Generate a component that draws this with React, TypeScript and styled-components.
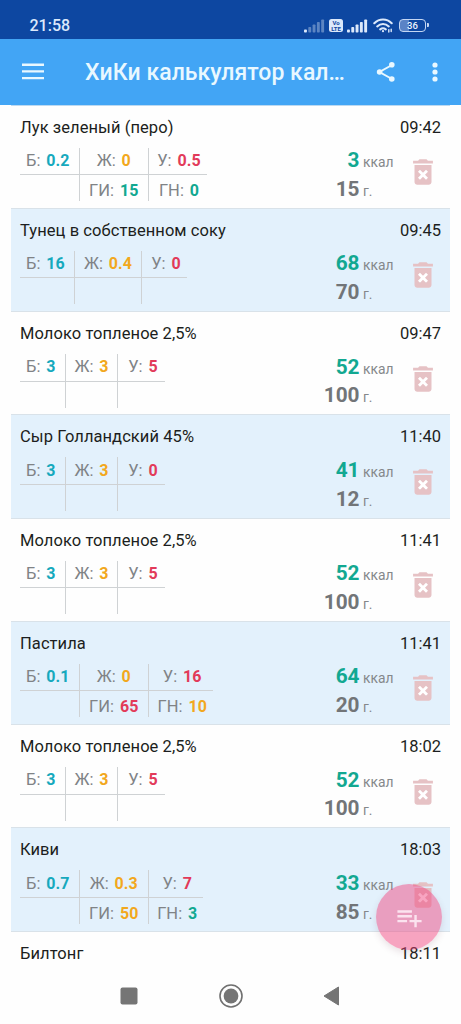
import React from 'react';
import styled, { createGlobalStyle } from 'styled-components';

const GlobalStyle = createGlobalStyle`
  * { box-sizing: border-box; }
  body { margin: 0; background: #fefefe; font-family: Roboto, "Liberation Sans", sans-serif; }
`;

const Screen = styled.div`
  position: relative;
  display: flex;
  flex-direction: column;
  width: 461px;
  height: 1024px;
  overflow: hidden;
  background: #fefefe;
`;

const StatusBar = styled.header`
  flex: none;
  display: flex;
  align-items: center;
  justify-content: space-between;
  height: 38.5px;
  padding: 13px 32px 0 29.5px;
  background: #0d47a1;
  color: #dce9fb;
`;

const Clock = styled.span`
  font-size: 16px;
  font-weight: 500;
  line-height: 20px;
`;

const StatusIcons = styled.div`
  display: flex;
  align-items: center;
  height: 16px;
`;

const Toolbar = styled.div`
  flex: none;
  display: flex;
  align-items: center;
  height: 66px;
  padding: 0 16px 0 22px;
  background: #42a5f5;
  color: #e9f8ff;
`;

const AppTitle = styled.h1`
  width: 266px;
  margin: 2px 0 0 41px;
  font-size: 23px;
  font-weight: 500;
  line-height: 30px;
  letter-spacing: 0.05px;
  white-space: nowrap;
`;

const IconButton = styled.button<{ $gap: number }>`
  display: flex;
  margin: 0 0 0 ${(p) => p.$gap}px;
  padding: 0;
  border: 0;
  background: none;
  color: inherit;
`;

const List = styled.main`
  flex: none;
  height: 860.5px;
  margin: 0 11px;
  overflow: hidden;
  border-top: 1px solid #bcd9f1;
`;

const Entry = styled.article<{ $tinted: boolean }>`
  display: flex;
  flex-direction: column;
  height: 103.25px;
  padding: 11px 9px 0 9px;
  background: ${(p) => (p.$tinted ? '#e3f1fc' : '#fefefe')};
  border-bottom: 1px solid #d9e2e9;
`;

const EntryHead = styled.div`
  display: flex;
  justify-content: space-between;
  height: 22px;
  color: #1c1e20;
  font-size: 16.5px;
  line-height: 22px;
  white-space: nowrap;
`;

const Name = styled.span`
  letter-spacing: 0.07px;
`;

const EntryBody = styled.div`
  display: flex;
  justify-content: space-between;
  margin-top: 9px;
`;

const Nutrients = styled.div<{ $cols: string }>`
  display: grid;
  grid-template-columns: ${(p) => p.$cols};
  grid-template-rows: 27.5px 26px;
`;

const Cell = styled.div<{ $first?: boolean; $last?: boolean; $top?: boolean }>`
  display: flex;
  align-items: center;
  justify-content: ${(p) => (p.$first ? 'flex-start' : 'center')};
  padding: ${(p) => (p.$top ? '0' : '6px')} 0 0 ${(p) => (p.$first ? '6px' : p.$last ? '3px' : '0')};
  border-right: ${(p) => (p.$last ? '0' : '1.5px solid #cfd2d4')};
  border-bottom: ${(p) => (p.$top ? '1.5px solid #cfd2d4' : '0')};
  color: #808386;
  font-size: 16.5px;
  line-height: 20px;
  white-space: pre;
`;

const Value = styled.b<{ $color: string }>`
  margin-left: 1.8px;
  color: ${(p) => p.$color};
  font-weight: 700;
  font-size: 16px;
  letter-spacing: 0.1px;
`;

const Side = styled.div`
  display: flex;
  align-items: flex-start;
`;

const Amounts = styled.div`
  display: grid;
  grid-template-columns: 60px 32px;
  grid-template-rows: 28.75px 28.75px;
  column-gap: 3.5px;
  align-items: baseline;
  line-height: 29px;
  margin: -1.5px 11px 0 0;
`;

const Amount = styled.b<{ $color: string }>`
  color: ${(p) => p.$color};
  font-size: 20.8px;
  font-weight: 700;
  text-align: right;
`;

const Unit = styled.span`
  color: #85888b;
  font-size: 13.8px;
`;

const DeleteButton = styled.button`
  display: flex;
  margin: 7.5px 1px 0 0;
  padding: 0;
  border: 0;
  background: none;
`;

const Fab = styled.button`
  position: absolute;
  left: 376px;
  top: 884px;
  display: flex;
  align-items: center;
  justify-content: center;
  width: 66px;
  height: 66px;
  padding: 0;
  border: 0;
  border-radius: 50%;
  background: rgba(240, 66, 126, 0.48);
  box-shadow: 0 3px 7px rgba(90, 40, 60, 0.13);
`;

const NavBar = styled.nav`
  flex: 1;
  display: flex;
  align-items: center;
  justify-content: space-between;
  padding: 3px 121px 0 120px;
`;

const TEAL = '#12a891';
const CYAN = '#16a9bd';
const AMBER = '#f2a81d';
const RED = '#e23a59';
const GREY = '#727578';

type Index = { value: string; color: string };
type Details = {
  macros: [string, string, string];
  gi?: Index;
  gn?: Index;
  kcal: string;
  grams: string;
  cols: string;
};
type Food = { name: string; time: string; details?: Details };

const NARROW = '46px 52px 47px';

const foods: Food[] = [
  { name: 'Лук зеленый (перо)', time: '09:42', details: { macros: ['0.2', '0', '0.5'], gi: { value: '15', color: TEAL }, gn: { value: '0', color: TEAL }, kcal: '3', grams: '15', cols: '60px 68.5px 58px' } },
  { name: 'Тунец в собственном соку', time: '09:45', details: { macros: ['16', '0.4', '0'], kcal: '68', grams: '70', cols: '55px 67px 45px' } },
  { name: 'Молоко топленое 2,5%', time: '09:47', details: { macros: ['3', '3', '5'], kcal: '52', grams: '100', cols: NARROW } },
  { name: 'Сыр Голландский 45%', time: '11:40', details: { macros: ['3', '3', '0'], kcal: '41', grams: '12', cols: NARROW } },
  { name: 'Молоко топленое 2,5%', time: '11:41', details: { macros: ['3', '3', '5'], kcal: '52', grams: '100', cols: NARROW } },
  { name: 'Пастила', time: '11:41', details: { macros: ['0.1', '0', '16'], gi: { value: '65', color: RED }, gn: { value: '10', color: AMBER }, kcal: '64', grams: '20', cols: '60px 68.5px 64.5px' } },
  { name: 'Молоко топленое 2,5%', time: '18:02', details: { macros: ['3', '3', '5'], kcal: '52', grams: '100', cols: NARROW } },
  { name: 'Киви', time: '18:03', details: { macros: ['0.7', '0.3', '7'], gi: { value: '50', color: AMBER }, gn: { value: '3', color: TEAL }, kcal: '33', grams: '85', cols: '60px 68.5px 54.5px' } },
  { name: 'Билтонг', time: '18:11' },
];

const Signal = ({ dim }: { dim?: boolean }) => (
  <svg width="21" height="14" viewBox="0 0 21 14" fill="#dce9fb">
    {[0, 1, 2, 3, 4].map((i) => (
      <rect key={i} x={i * 4.3} y={10.5 - i * 2.5} width="2.9" height={3 + i * 2.5} rx="0.8" opacity={dim && i > 0 ? 0.38 : 1} />
    ))}
  </svg>
);

const VolteBadge = styled.span`
  display: flex;
  flex-direction: column;
  align-items: center;
  justify-content: center;
  width: 14px;
  height: 13px;
  margin: 0 4px 0 4px;
  border-radius: 2.5px;
  background: #dce9fb;
  color: #0d47a1;
  font-size: 6px;
  font-weight: 700;
  line-height: 5.5px;
`;

const WifiIcon = styled.svg`
  margin: 0 6px 0 5px;
`;

const Wifi = () => (
  <WifiIcon width="20" height="15" viewBox="0 0 20 15" fill="none" stroke="#dce9fb" strokeWidth="2.1" strokeLinecap="round">
    <path d="M1.3 5.2C6.3 0.3 13.7 0.3 18.7 5.2" />
    <path d="M4.2 8.4C7.6 5.2 12.4 5.2 15.8 8.4" />
    <path d="M7.2 11.4C8.9 10 11.1 10 12.8 11.4" />
    <circle cx="10" cy="13.2" r="1.1" fill="#dce9fb" stroke="none" />
    <path d="M15.8 11.6v2.4M18.2 11.2v2.4" strokeWidth="1.4" />
  </WifiIcon>
);

const BatteryIcon = styled.span`
  position: relative;
  display: flex;
  align-items: center;
  justify-content: center;
  width: 27px;
  height: 13px;
  margin-right: 3px;
  border: 1.5px solid #c3d6f3;
  border-radius: 4px;
  background: linear-gradient(90deg, #5a83c6 36%, transparent 36%);
  color: #eef5ff;
  font-size: 9.5px;
  font-weight: 500;
  line-height: 10px;
  &::after {
    content: '';
    position: absolute;
    right: -4px;
    top: 3px;
    width: 2px;
    height: 4px;
    border-radius: 0 1px 1px 0;
    background: #c3d6f3;
  }
`;

const FoodDetails = ({ details }: { details: Details }) => {
  const { macros: [b, zh, u], gi, gn, kcal, grams, cols } = details;
  return (
    <EntryBody>
      <Nutrients $cols={cols}>
        <Cell $top $first>Б: <Value $color={CYAN}>{b}</Value></Cell>
        <Cell $top>Ж: <Value $color={AMBER}>{zh}</Value></Cell>
        <Cell $top $last>У: <Value $color={RED}>{u}</Value></Cell>
        <Cell $first />
        <Cell>{gi && <>ГИ: <Value $color={gi.color}>{gi.value}</Value></>}</Cell>
        <Cell $last>{gn && <>ГН: <Value $color={gn.color}>{gn.value}</Value></>}</Cell>
      </Nutrients>
      <Side>
        <Amounts>
          <Amount $color={TEAL}>{kcal}</Amount>
          <Unit>ккал</Unit>
          <Amount $color={GREY}>{grams}</Amount>
          <Unit>г.</Unit>
        </Amounts>
        <DeleteButton aria-label="Удалить">
          <svg width="34" height="34" viewBox="0 0 24 24">
            <path d="M8 9h8v8H8z" fill="#fff" />
            <path
              fill="#e6c2c5"
              d="M6 19c0 1.1.9 2 2 2h8c1.1 0 2-.9 2-2V7H6v12zm2.46-7.12l1.41-1.41L12 12.59l2.12-2.12 1.41 1.41L13.41 14l2.12 2.12-1.41 1.41L12 15.41l-2.12 2.12-1.41-1.41L10.59 14l-2.13-2.12zM15.5 4l-1-1h-5l-1 1H5v2h14V4z"
            />
          </svg>
        </DeleteButton>
      </Side>
    </EntryBody>
  );
};

const FoodEntry = ({ food, tinted }: { food: Food; tinted: boolean }) => (
  <Entry $tinted={tinted}>
    <EntryHead>
      <Name>{food.name}</Name>
      <span>{food.time}</span>
    </EntryHead>
    {food.details && <FoodDetails details={food.details} />}
  </Entry>
);

export default function App() {
  return (
    <Screen>
      <GlobalStyle />
      <StatusBar>
        <Clock>21:58</Clock>
        <StatusIcons>
          <Signal dim />
          <VolteBadge><span>Vo</span><span>LTE</span></VolteBadge>
          <Signal />
          <Wifi />
          <BatteryIcon>36</BatteryIcon>
        </StatusIcons>
      </StatusBar>
      <Toolbar>
        <IconButton $gap={0} aria-label="Меню">
          <svg width="22" height="17" viewBox="0 0 22 17" fill="currentColor">
            <path d="M0 .5h22v2.4H0zM0 7.2h22v2.4H0zM0 13.9h22v2.4H0z" />
          </svg>
        </IconButton>
        <AppTitle>ХиКи калькулятор кал…</AppTitle>
        <IconButton $gap={25} aria-label="Поделиться">
          <svg width="20" height="22" viewBox="0 0 20 22" fill="currentColor">
            <path d="M16 4 3.5 11 16 18" fill="none" stroke="currentColor" strokeWidth="2" />
            <circle cx="15.8" cy="3.7" r="2.8" />
            <circle cx="3.6" cy="11" r="2.8" />
            <circle cx="15.8" cy="18" r="2.8" />
          </svg>
        </IconButton>
        <IconButton $gap={36} aria-label="Ещё">
          <svg width="6" height="20" viewBox="0 0 6 20" fill="currentColor">
            <circle cx="3" cy="3" r="2.6" />
            <circle cx="3" cy="10" r="2.6" />
            <circle cx="3" cy="17" r="2.6" />
          </svg>
        </IconButton>
      </Toolbar>
      <List>
        {foods.map((food, i) => (
          <FoodEntry key={i} food={food} tinted={i % 2 === 1} />
        ))}
      </List>
      <NavBar>
        <svg width="18" height="18" viewBox="0 0 18 18"><rect x="0.5" y="0.5" width="17" height="17" rx="2" fill="#757575" /></svg>
        <svg width="24" height="24" viewBox="0 0 24 24">
          <circle cx="12" cy="12" r="11" fill="none" stroke="#707070" strokeWidth="1.6" />
          <circle cx="12" cy="12" r="7.4" fill="#757575" />
        </svg>
        <svg width="17" height="20" viewBox="0 0 17 20"><path d="M15.5 1v18L1 10z" fill="#757575" stroke="#757575" strokeLinejoin="round" /></svg>
      </NavBar>
      <Fab aria-label="Добавить">
        <svg width="29" height="29" viewBox="0 0 24 24" fill="#fbe3ef">
          <path d="M14 10H2v2h12v-2zm0-4H2v2h12V6zm4 8v-4h-2v4h-4v2h4v4h2v-4h4v-2h-4zM2 16h8v-2H2v2z" />
        </svg>
      </Fab>
    </Screen>
  );
}
